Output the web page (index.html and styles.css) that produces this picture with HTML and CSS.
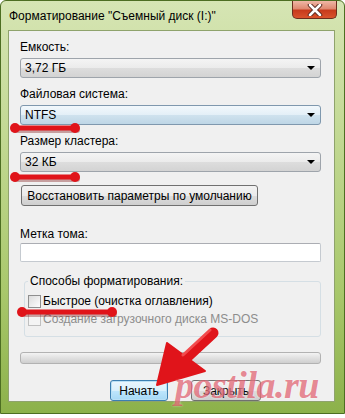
FILE: index.html
```html
<!DOCTYPE html>
<html lang="ru">
<head>
  <meta charset="UTF-8">
  <title>Форматирование</title>
  <link rel="stylesheet" href="styles.css">
</head>
<body>

<div class="window">
  <div class="titlebar">
    <span class="title">Форматирование "Съемный диск (I:)"</span>
    <div class="close">
      <svg width="16" height="12" viewBox="0 0 16 12">
        <path d="M3 1 L13 11 M13 1 L3 11" stroke="#5a2a20" stroke-width="4.5" stroke-linecap="round"/>
        <path d="M3 1 L13 11 M13 1 L3 11" stroke="#fff" stroke-width="2.5" stroke-linecap="round"/>
      </svg>
    </div>
  </div>

  <div class="client">
    <div class="label">Емкость:</div>
    <div class="combo"><span>3,72 ГБ</span><i class="arrow"></i></div>

    <div class="label field">Файловая система:</div>
    <div class="combo focus"><span>NTFS</span><i class="arrow"></i></div>

    <div class="label field">Размер кластера:</div>
    <div class="combo"><span>32 КБ</span><i class="arrow"></i></div>

    <div class="btn restore">Восстановить параметры по умолчанию</div>

    <div class="label volume">Метка тома:</div>
    <div class="textbox"></div>

    <fieldset class="group">
      <legend>Способы форматирования:</legend>
      <div class="check"><i class="box"></i>Быстрое (очистка оглавления)</div>
      <div class="check disabled"><i class="box"></i>Создание загрузочного диска MS-DOS</div>
    </fieldset>

    <div class="progress"></div>

    <div class="actions">
      <div class="btn start">Начать</div>
      <div class="btn close-btn">Закрыть</div>
    </div>
  </div>

  <!-- red marks drawn over the screenshot -->
  <svg class="marks" width="345" height="418" viewBox="0 0 345 418">
    <g fill="#7a0a0a" stroke="#7a0a0a" opacity="0.35" transform="translate(1,2)">
      <path d="M14 128 L76 128" stroke-width="6" stroke-linecap="round"/>
      <path d="M14 177 L76 177" stroke-width="6" stroke-linecap="round"/>
      <path d="M21 312 L113 312" stroke-width="6" stroke-linecap="round"/>
    </g>
    <g fill="#e0141a" stroke="#e0141a">
      <path d="M14 128 L76 128" stroke-width="5" stroke-linecap="round"/>
      <circle cx="15" cy="128" r="5" stroke="none"/>
      <circle cx="75" cy="128" r="5" stroke="none"/>
      <path d="M14 177 L76 177" stroke-width="5" stroke-linecap="round"/>
      <circle cx="15" cy="177" r="5" stroke="none"/>
      <circle cx="75" cy="177" r="5" stroke="none"/>
      <path d="M21 312 L113 312" stroke-width="5" stroke-linecap="round"/>
      <circle cx="22" cy="312" r="5" stroke="none"/>
      <circle cx="112" cy="312" r="5" stroke="none"/>
      <path d="M213 333 L186 358" stroke-width="11" stroke-linecap="round"/>
      <path d="M157 385 L167 343 L205 371 Z" stroke-width="2" stroke-linejoin="round"/>
    </g>
    <path d="M210 330 L183 355" stroke="#ff7070" stroke-width="3" stroke-linecap="round" opacity="0.6"/>
  </svg>

  <div class="watermark">postila.ru</div>
</div>

</body>
</html>
```

FILE: styles.css
```css
body { margin: 0; padding: 0; background: #fff; font-family: "Liberation Sans", Arial, sans-serif; font-size: 12px; color: #000; }

.window { position: relative; width: 345px; height: 414px; box-sizing: border-box; padding: 0 9px 12px 7px; border: 1px solid #4d6e22; border-radius: 6px 6px 0 0; background: linear-gradient(#d6e5b4, #c4da96 30%, #a9c86c 70%, #8cb14a); }
.titlebar { display: flex; align-items: flex-start; height: 29px; }
.title { padding: 8px 0 0 1px; line-height: 14px; }
.close { margin-left: auto; margin-right: -2px; width: 45px; height: 18px; box-sizing: border-box; display: flex; align-items: center; justify-content: center; border: 1px solid #6b2e1e; border-top: none; border-radius: 0 0 5px 5px; background: linear-gradient(#efb7a6, #df8a72 45%, #c73b1c 55%, #d9532c); }

.client { height: 372px; box-sizing: border-box; padding: 8px 13px 0 11px; background: #f0f0f0; border: 1px solid #8fa36c; }
.label { height: 16px; line-height: 16px; }
.field { margin-top: 8px; }
.volume { margin-top: 20px; }

.combo { display: flex; align-items: center; height: 20px; margin-top: 3px; box-sizing: border-box; padding: 0 5px 0 4px; border: 1px solid #9ea4ab; border-radius: 3px; background: linear-gradient(#f4f4f4, #ebebeb 50%, #dddddd 51%, #d3d3d3); }
.combo.focus { border-color: #7f98ae; background: linear-gradient(#f2f8fc, #e3eff7 50%, #cfe2ee 51%, #bed6e6); }
.arrow { margin-left: auto; width: 0; height: 0; border-left: 4px solid transparent; border-right: 4px solid transparent; border-top: 4px solid #000; }

.btn { display: flex; align-items: center; justify-content: center; height: 21px; box-sizing: border-box; border: 1px solid #707070; border-radius: 3px; background: linear-gradient(#f2f2f2, #ebebeb 50%, #dddddd 51%, #cfcfcf); }
.restore { width: 237px; margin: 13px 0 0 1px; }

.textbox { height: 19px; margin-top: 1px; box-sizing: border-box; background: #fff; border: 1px solid #c5cad0; border-top-color: #abadb3; border-radius: 2px; }

.group { margin: 11px 0 0 4px; padding: 0 0 8px 3px; border: 1px solid #d5dfe5; border-radius: 3px; }
.group legend { padding: 0 2px; margin-left: 0; line-height: 16px; }
.check { display: flex; align-items: center; gap: 2px; height: 18px; }
.check:first-of-type { margin-top: 3px; }
.box { width: 13px; height: 13px; box-sizing: border-box; border: 1px solid #8f8f8f; background: linear-gradient(135deg, #dcdcdc, #fdfdfd); }
.disabled { color: #8d8d8d; }
.disabled .box { border-color: #c0c0c0; background: #f4f4f4; }

.progress { height: 12px; margin-top: 15px; box-sizing: border-box; border: 1px solid #b2b2b2; border-radius: 3px; background: linear-gradient(#f3f3f3, #e2e2e2 45%, #cfcfcf); }

.actions { display: flex; gap: 23px; margin-top: 16px; padding-left: 90px; }
.start { width: 58px; border-color: #3c7fb1; box-shadow: inset 0 0 0 1px #b9e0f5; background: linear-gradient(#eaf6fd, #d9f0fc 50%, #bee6fd 51%, #a7d9f5); }
.close-btn { width: 70px; }

.marks { position: absolute; top: -1px; left: -1px; pointer-events: none; }
.watermark { position: absolute; left: 174px; top: 362px; font-family: "Liberation Serif", serif; font-style: italic; font-weight: bold; font-size: 38px; color: rgba(214, 40, 60, 0.55); letter-spacing: -0.5px; text-shadow: 0 0 2px rgba(255, 255, 255, 0.6); pointer-events: none; }
```
